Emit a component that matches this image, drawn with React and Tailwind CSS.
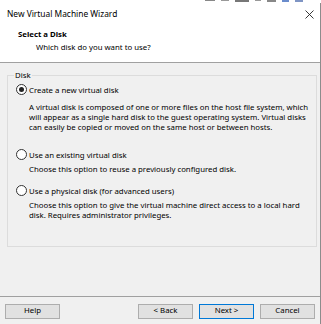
const Radio = ({ checked, label }) => (
  <div className="flex items-center gap-[2px] h-[13px]">
    <span className="w-[11px] h-[11px] rounded-full border border-[#333] bg-white flex items-center justify-center">
      {checked && <span className="w-[5px] h-[5px] rounded-full bg-[#222]" />}
    </span>
    <span>{label}</span>
  </div>
);

const Btn = ({ children, primary }) => (
  <button
    className={
      primary
        ? "w-[55px] h-[15px] bg-[#e1e1e1] border border-[#0078d7] leading-none"
        : "w-[55px] h-[15px] bg-[#e1e1e1] border border-[#adadad] leading-none"
    }
  >
    {children}
  </button>
);

export default function App() {
  return (
    <div
      className="w-[321px] h-[324px] bg-white relative overflow-hidden text-[7.8px] text-[#000] leading-[10px]"
      style={{ fontFamily: '"Noto Sans", "Open Sans", sans-serif' }}
    >
      {/* bits of the window behind */}
      <div className="h-[3px] w-full flex items-start gap-[6px] pl-[205px]">
        <span className="w-[10px] h-[1px] bg-[#888]" />
        <span className="w-[8px] h-[1px] bg-[#999]" />
        <span className="w-[14px] h-[2px] bg-[#777]" />
        <span className="w-[6px] h-[1px] bg-[#999]" />
        <span className="w-[9px] h-[2px] bg-[#888]" />
        <span className="w-[7px] h-[2px] bg-[#6a8ccc]" />
        <span className="w-[8px] h-[2px] bg-[#7f95c4]" />
      </div>
      <div className="flex flex-col h-[321px] border-r border-[#8c8c8c]">
        {/* title bar */}
        <div className="h-[22px] flex items-center justify-between pl-[7px] pr-[6px]">
          <span className="text-[8.4px]">New Virtual Machine Wizard</span>
          <svg width="9" height="9" viewBox="0 0 9 9">
            <path d="M0.5 0.5 L8.5 8.5 M8.5 0.5 L0.5 8.5" stroke="#222" strokeWidth="0.9" />
          </svg>
        </div>

        {/* header */}
        <div className="h-[38px] bg-white border-b border-[#a0a0a0] pl-[18px] pt-[4px]">
          <div className="font-bold">Select a Disk</div>
          <div className="pl-[18px] mt-[3px]">Which disk do you want to use?</div>
        </div>

        {/* body */}
        <div className="flex-1 bg-[#f0f0f0] px-[7px] pt-[7px]">
          <fieldset className="border border-[#dcdcdc] h-[177px] pl-[8px] pr-[8px]">
            <legend className="ml-[-2px] px-[1px] text-[#000]">Disk</legend>
            <div className="mt-[3px]">
              <Radio checked label="Create a new virtual disk" />
              <div className="pl-[13px] mt-[6px] whitespace-nowrap">
                A virtual disk is composed of one or more files on the host file system, which
                <br />
                will appear as a single hard disk to the guest operating system. Virtual disks
                <br />
                can easily be copied or moved on the same host or between hosts.
              </div>
            </div>
            <div className="mt-[16px]">
              <Radio label="Use an existing virtual disk" />
              <div className="pl-[13px] mt-[3px]">
                Choose this option to reuse a previously configured disk.
              </div>
            </div>
            <div className="mt-[10px]">
              <Radio label="Use a physical disk (for advanced users)" />
              <div className="pl-[13px] mt-[3px] whitespace-nowrap">
                Choose this option to give the virtual machine direct access to a local hard
                <br />
                disk. Requires administrator privileges.
              </div>
            </div>
          </fieldset>
        </div>

        {/* footer */}
        <div className="h-[28px] bg-[#f0f0f0] border-t border-[#a0a0a0] flex items-center px-[5px] pt-[1px]">
          <Btn>Help</Btn>
          <div className="flex-1" />
          <div className="flex gap-[6px]">
            <Btn>&lt; Back</Btn>
            <Btn primary>Next &gt;</Btn>
            <Btn>Cancel</Btn>
          </div>
        </div>
      </div>
    </div>
  );
}
